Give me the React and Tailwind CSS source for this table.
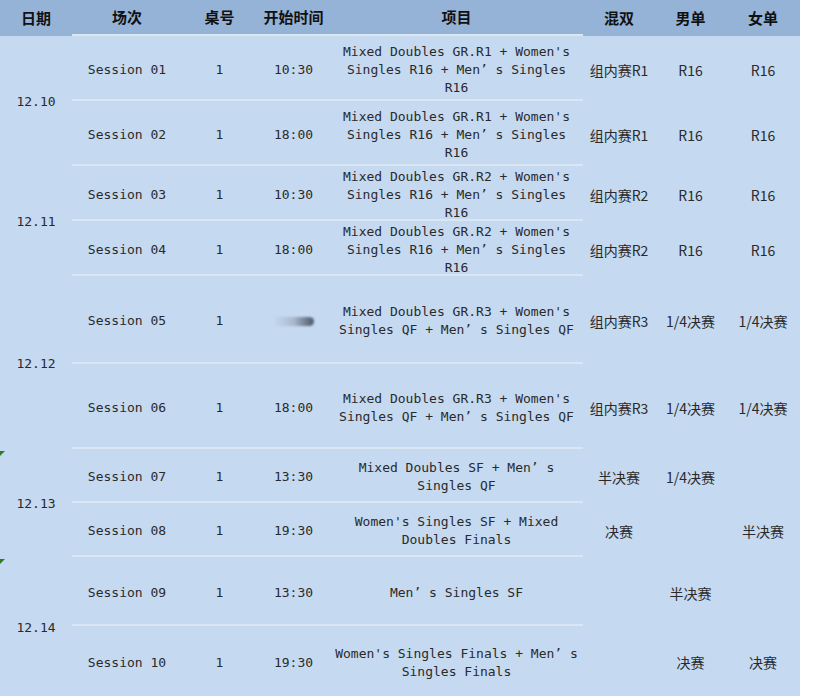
const dates = [
  { label: '12.10', h: 'h-[130px]' },
  { label: '12.11', h: 'h-[110px]' },
  { label: '12.12', h: 'h-[173px]' },
  { label: '12.13', h: 'h-[108px]', mark: true },
  { label: '12.14', h: 'h-[139px]', mark: true },
];

const rows = [
  { s: '01', h: 'h-[65px]', t: '10:30', ev: ["Mixed Doubles GR.R1 + Women's", 'Singles R16 + Men’ s Singles', 'R16'], xd: '组内赛R1', ms: 'R16', ws: 'R16' },
  { s: '02', h: 'h-[65px]', t: '18:00', ev: ["Mixed Doubles GR.R1 + Women's", 'Singles R16 + Men’ s Singles', 'R16'], xd: '组内赛R1', ms: 'R16', ws: 'R16' },
  { s: '03', h: 'h-[55px]', t: '10:30', ev: ["Mixed Doubles GR.R2 + Women's", 'Singles R16 + Men’ s Singles', 'R16'], xd: '组内赛R2', ms: 'R16', ws: 'R16' },
  { s: '04', h: 'h-[55px]', t: '18:00', ev: ["Mixed Doubles GR.R2 + Women's", 'Singles R16 + Men’ s Singles', 'R16'], xd: '组内赛R2', ms: 'R16', ws: 'R16' },
  { s: '05', h: 'h-[88px]', t: null, ev: ["Mixed Doubles GR.R3 + Women's", 'Singles QF + Men’ s Singles QF'], xd: '组内赛R3', ms: '1/4决赛', ws: '1/4决赛' },
  { s: '06', h: 'h-[85px]', t: '18:00', ev: ["Mixed Doubles GR.R3 + Women's", 'Singles QF + Men’ s Singles QF'], xd: '组内赛R3', ms: '1/4决赛', ws: '1/4决赛' },
  { s: '07', h: 'h-[54px]', t: '13:30', ev: ['Mixed Doubles SF + Men’ s', 'Singles QF'], xd: '半决赛', ms: '1/4决赛', ws: '' },
  { s: '08', h: 'h-[54px]', t: '19:30', ev: ["Women's Singles SF + Mixed", 'Doubles Finals'], xd: '决赛', ms: '', ws: '半决赛' },
  { s: '09', h: 'h-[69px]', t: '13:30', ev: ['Men’ s Singles SF'], xd: '', ms: '半决赛', ws: '' },
  { s: '10', h: 'h-[70px]', t: '19:30', ev: ["Women's Singles Finals + Men’ s", 'Singles Finals'], xd: '', ms: '决赛', ws: '决赛', last: true },
];

const mono = "font-['DejaVu_Sans_Mono','Noto_Sans_CJK_SC',monospace]";
const cjk = "font-['Noto_Sans_CJK_SC',sans-serif]";

function Cell({ w, line, children, className = '' }) {
  return (
    <div
      className={`${w} flex items-center justify-center text-center ${line ? 'border-b-2 border-[#dbe6f3]' : ''} ${className}`}
    >
      {children}
    </div>
  );
}

function BlurredTime() {
  return (
    <div className="w-[40px] h-[9px] rounded-r-full bg-linear-to-r from-transparent via-[#a9b8ca] to-[#4d5a6b] blur-[1px]" />
  );
}

export default function App() {
  return (
    <div className="flex w-[819px] h-[696px] bg-white text-[#2a2a2a]">
      <div className="w-[800px] bg-[#c5d9f1] flex flex-col">
        <div className="flex h-[36px] bg-[#95b3d7] font-bold text-[15px] text-[#111] font-['Noto_Sans_CJK_SC',sans-serif]">
          <Cell w="w-[72px]">日期</Cell>
          <Cell w="w-[110px]" line>场次</Cell>
          <Cell w="w-[75px]" line>桌号</Cell>
          <Cell w="w-[73px]" line>开始时间</Cell>
          <Cell w="w-[253px]" line>项目</Cell>
          <Cell w="w-[72px]">混双</Cell>
          <Cell w="w-[71px]">男单</Cell>
          <Cell w="w-[74px]">女单</Cell>
        </div>
        <div className="flex flex-1">
          <div className={`w-[72px] flex flex-col text-[13px] ${mono}`}>
            {dates.map((d) => (
              <div key={d.label} className={`${d.h} relative flex items-center justify-center pt-[2px]`}>
                {d.mark && (
                  <span className="absolute top-[2px] left-0 w-0 h-0 border-t-[5px] border-t-[#2f7d2a] border-r-[5px] border-r-transparent" />
                )}
                {d.label}
              </div>
            ))}
          </div>
          <div className="flex flex-col">
            {rows.map((r) => (
              <div key={r.s} className={`${r.h} flex text-[13px] leading-[18px]`}>
                <Cell w="w-[110px]" line={!r.last} className={mono}>
                  <span className="translate-y-[2px]">Session {r.s}</span>
                </Cell>
                <Cell w="w-[75px]" line={!r.last} className={mono}>
                  <span className="translate-y-[2px]">1</span>
                </Cell>
                <Cell w="w-[73px]" line={!r.last} className={mono}>
                  <span className="translate-y-[2px]">{r.t ? r.t : <BlurredTime />}</span>
                </Cell>
                <Cell w="w-[253px]" line={!r.last} className={mono}>
                  <div className="flex flex-col translate-y-[2px]">
                    {r.ev.map((l, i) => (
                      <span key={i} className="whitespace-pre">{l}</span>
                    ))}
                  </div>
                </Cell>
                <Cell w="w-[72px]" className={`${cjk} text-[14px] pt-[2px]`}>{r.xd}</Cell>
                <Cell w="w-[71px]" className={`${cjk} text-[14px] pt-[2px]`}>{r.ms}</Cell>
                <Cell w="w-[74px]" className={`${cjk} text-[14px] pt-[2px]`}>{r.ws}</Cell>
              </div>
            ))}
          </div>
        </div>
      </div>
    </div>
  );
}
